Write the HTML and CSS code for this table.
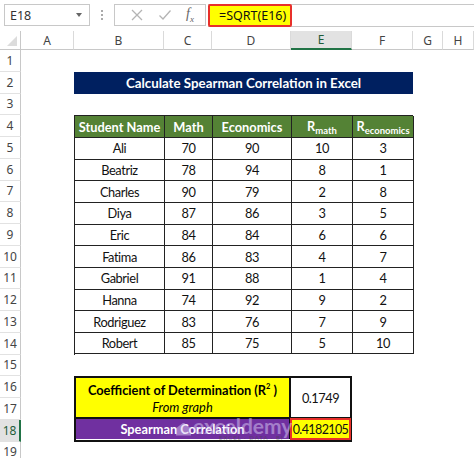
FILE: index.html
```html
<!DOCTYPE html>
<html>
<head>
<meta charset="utf-8">
<link rel="stylesheet" href="styles.css">
</head>
<body>
<div class="app">
  <div class="fbar">
    <div class="namebox"><span class="nb-text">E18</span><span class="nb-arrow"></span></div>
    <div class="dots"><i></i><i></i><i></i></div>
    <div class="fxbox">
      <svg class="ic" width="14" height="14" viewBox="0 0 14 14"><path d="M2 2 L12 12 M12 2 L2 12" stroke="#b4b4b4" stroke-width="1.3" fill="none"/></svg>
      <svg class="ic" width="14" height="14" viewBox="0 0 14 14"><path d="M1.5 7.5 L5 11 L12.5 2.5" stroke="#b4b4b4" stroke-width="1.3" fill="none"/></svg>
      <span class="fx">f<sub>x</sub></span>
    </div>
    <div class="finput">
      <div class="fval">=SQRT(E16)</div>
    </div>
  </div>

  <div class="sheet">
    <div class="corner"><span class="tri"></span></div>
    <div class="ch">A</div>
    <div class="ch">B</div>
    <div class="ch">C</div>
    <div class="ch">D</div>
    <div class="ch sel">E</div>
    <div class="ch">F</div>
    <div class="ch">G</div>
    <div class="ch">H</div>

    <div class="rh" style="grid-row:2">1</div>
    <div class="rh" style="grid-row:3">2</div>
    <div class="rh" style="grid-row:4">3</div>
    <div class="rh" style="grid-row:5">4</div>
    <div class="rh" style="grid-row:6">5</div>
    <div class="rh" style="grid-row:7">6</div>
    <div class="rh" style="grid-row:8">7</div>
    <div class="rh" style="grid-row:9">8</div>
    <div class="rh" style="grid-row:10">9</div>
    <div class="rh" style="grid-row:11">10</div>
    <div class="rh" style="grid-row:12">11</div>
    <div class="rh" style="grid-row:13">12</div>
    <div class="rh" style="grid-row:14">13</div>
    <div class="rh" style="grid-row:15">14</div>
    <div class="rh" style="grid-row:16">15</div>
    <div class="rh" style="grid-row:17">16</div>
    <div class="rh" style="grid-row:18">17</div>
    <div class="rh sel" style="grid-row:19">18</div>
    <div class="rh" style="grid-row:20">19</div>

    <div class="title">Calculate Spearman Correlation in Excel</div>

    <div class="tbl">
      <div class="th">Student Name</div><div class="th">Math</div><div class="th">Economics</div><div class="th"><span>R<sub>math</sub></span></div><div class="th"><span>R<sub>economics</sub></span></div>
      <div class="td">Ali</div><div class="td">70</div><div class="td">90</div><div class="td">10</div><div class="td">3</div>
      <div class="td">Beatriz</div><div class="td">78</div><div class="td">94</div><div class="td">8</div><div class="td">1</div>
      <div class="td">Charles</div><div class="td">90</div><div class="td">79</div><div class="td">2</div><div class="td">8</div>
      <div class="td">Diya</div><div class="td">87</div><div class="td">86</div><div class="td">3</div><div class="td">5</div>
      <div class="td">Eric</div><div class="td">84</div><div class="td">84</div><div class="td">6</div><div class="td">6</div>
      <div class="td">Fatima</div><div class="td">86</div><div class="td">83</div><div class="td">4</div><div class="td">7</div>
      <div class="td">Gabriel</div><div class="td">91</div><div class="td">88</div><div class="td">1</div><div class="td">4</div>
      <div class="td">Hanna</div><div class="td">74</div><div class="td">92</div><div class="td">9</div><div class="td">2</div>
      <div class="td">Rodriguez</div><div class="td">83</div><div class="td">76</div><div class="td">7</div><div class="td">9</div>
      <div class="td">Robert</div><div class="td">85</div><div class="td">75</div><div class="td">5</div><div class="td">10</div>
    </div>

    <div class="res">
      <div class="coef"><b>Coefficient of Determination (R<sup>2</sup>&nbsp;)</b><i>From graph</i></div>
      <div class="coefv">0.1749</div>
      <div class="spear">Spearman Correlation</div>
      <div class="spearv">0.4182105</div>
    </div>

    <div class="wm"><span class="wm-logo"></span><span class="wm-t">exceldemy<small>EXCEL · DATA · BI</small></span></div>
  </div>
</div>
</body>
</html>
```

FILE: styles.css
```css
* { box-sizing: border-box; }
html, body { margin: 0; padding: 0; background: #fff; }
body { width: 474px; height: 458px; overflow: hidden; font-family: Lato, "Open Sans", sans-serif; }
.app { width: 474px; height: 458px; position: relative; }

.fbar { height: 31px; display: flex; align-items: flex-start; padding-top: 4px; padding-left: 4px; }
.namebox { width: 86px; height: 22px; border: 1px solid #c8c8c8; display: flex; align-items: center; justify-content: space-between; padding: 0 7px 0 5px; font-family: "Noto Sans", sans-serif; font-size: 12.5px; color: #333; }
.nb-arrow { width: 0; height: 0; border-left: 3.5px solid transparent; border-right: 3.5px solid transparent; border-top: 4px solid #666; }
.dots { width: 24px; height: 22px; display: flex; flex-direction: column; align-items: center; justify-content: center; gap: 2px; }
.dots i { width: 2px; height: 2px; background: #aaa; display: block; }
.fxbox { width: 92px; height: 22px; border: 1px solid #c8c8c8; display: flex; align-items: center; justify-content: space-around; padding: 0 4px 0 8px; }
.fx { font-family: "Liberation Serif", serif; font-style: italic; font-size: 14px; color: #666; }
.fx sub { font-size: 9px; }
.finput { flex: 1; height: 23px; border-top: 1px solid #c8c8c8; border-bottom: 1px solid #c8c8c8; margin-left: 2px; display: flex; }
.fval { width: 84px; height: 23px; margin-top: -1px; background: #ffff00; border: 2px solid #e8302a; border-radius: 2px; font-family: "Noto Sans", sans-serif; font-size: 12.5px; color: #111; display: flex; align-items: center; padding-left: 9px; }

.sheet { position: relative; display: grid; grid-template-columns: 21px 53px 90px 48px 79px 61px 61px 30px 1fr; grid-template-rows: 19px repeat(19, 21.75px); }
.corner { grid-row: 1; grid-column: 1; border-right: 1px solid #c8c8c8; border-bottom: 1px solid #c8c8c8; position: relative; }
.tri { position: absolute; right: 3px; bottom: 3px; width: 0; height: 0; border-left: 10px solid transparent; border-bottom: 10px solid #dcdcdc; }
.ch { grid-row: 1; border-right: 1px solid #dadada; border-bottom: 1px solid #c8c8c8; font-family: "Noto Sans", sans-serif; font-size: 12px; color: #444; display: flex; align-items: center; justify-content: center; }
.ch.sel { background: #e2e2e2; border-bottom: 2px solid #217346; color: #1e5c38; }
.rh { grid-column: 1; border-right: 1px solid #c8c8c8; border-bottom: 1px solid #e2e2e2; font-family: "Noto Sans", sans-serif; font-size: 12px; color: #444; display: flex; align-items: center; justify-content: center; }
.rh.sel { background: #e2e2e2; border-right: 2px solid #217346; color: #1e5c38; }

.title { grid-row: 3; grid-column: 3 / 8; background: #002060; color: #fff; font-weight: 700; font-size: 13.3px; display: flex; align-items: center; justify-content: center; white-space: nowrap; }

.tbl { grid-row: 5 / 16; grid-column: 3 / 8; display: grid; grid-template-columns: 90px 48px 79px 61px 61px; grid-template-rows: repeat(11, minmax(0, 1fr)); border-top: 1px solid #222; border-left: 1px solid #222; }
.th, .td { border-right: 1px solid #222; border-bottom: 1px solid #222; display: flex; align-items: center; justify-content: center; font-size: 12.8px; color: #111; white-space: nowrap; }
.td { letter-spacing: -0.4px; }
.th { background: #548235; color: #fff; font-weight: 700; }
.th span { line-height: 14px; padding-bottom: 2px; }
.th sub { font-size: 9.5px; vertical-align: -3px; line-height: 0; font-weight: 700; }

.res { grid-row: 17 / 20; grid-column: 3 / 7; display: grid; grid-template-columns: minmax(0, 1fr) 59px; grid-template-rows: minmax(0, 2fr) minmax(0, 1fr); border: 2px solid #111; }
.coef { background: #ffff00; display: flex; flex-direction: column; align-items: center; justify-content: center; border-right: 2px solid #111; border-bottom: 2px solid #111; font-size: 12.8px; color: #000; line-height: 17px; padding-top: 2px; white-space: nowrap; }
.coef sup { font-size: 7.5px; vertical-align: 6px; line-height: 0; }
.coef i { font-style: italic; }
.coefv { background: #fff; display: flex; align-items: center; justify-content: center; border-bottom: 2px solid #111; font-size: 12.8px; letter-spacing: -0.5px; color: #111; }
.spear { background: #7030a0; color: #fff; font-weight: 700; font-size: 12.8px; display: flex; align-items: center; justify-content: center; border-right: 2px solid #111; white-space: nowrap; }
.spearv { background: #ffff00; font-size: 12.5px; letter-spacing: -0.6px; color: #111; display: flex; align-items: center; justify-content: center; box-shadow: 0 0 0 1px #e8302a, inset 0 0 0 1px #e8302a; white-space: nowrap; position: relative; }

.wm { position: absolute; left: 176px; top: 386px; height: 24px; display: flex; align-items: center; gap: 2px; opacity: 0.5; pointer-events: none; }
.wm-logo { width: 15px; height: 13px; background: #d8c8f0; clip-path: polygon(50% 0, 100% 45%, 100% 100%, 0 100%, 0 45%); }
.wm-t { color: #d8ccf4; font-weight: 700; font-size: 21px; line-height: 16px; display: flex; flex-direction: column; }
.wm-t small { font-size: 6px; line-height: 7px; letter-spacing: 1px; font-weight: 400; padding-left: 26px; color: #444; }
```
